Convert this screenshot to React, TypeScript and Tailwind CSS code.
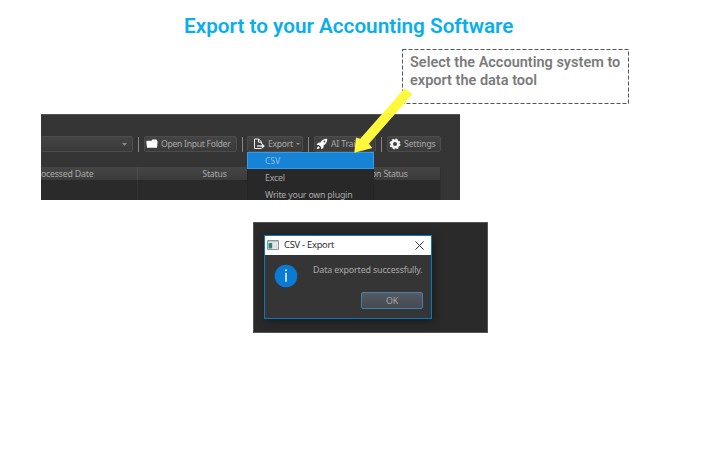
import React from 'react';

const ui = "font-['Noto_Sans','Open_Sans',sans-serif]";

function Separator() {
  return <span className="h-[15px] w-px shrink-0 bg-[#858585]" />;
}

function ToolButton({ className, children }: { className: string; children: React.ReactNode }) {
  return (
    <div
      className={`flex h-4 shrink-0 items-center whitespace-nowrap rounded-[2px] border border-[#4c4c4c] bg-linear-to-b from-[#444] to-[#3a3a3a] text-[8.7px] leading-[10px] tracking-[-0.19px] text-[#a9a9a9] ${className}`}
    >
      {children}
    </div>
  );
}

function FolderIcon() {
  return (
    <svg className="mr-[3px] h-[10px] w-[12px] shrink-0" viewBox="0 0 12 10">
      <path d="M.8 1.7h4.7L6.4.5h4l.6 1.3.6.8-.6 6.1H1L.3 2.7z" fill="#fff" />
      <path d="M.8 2.5h10.4" stroke="#ddd" strokeWidth=".5" />
    </svg>
  );
}

function ExportIcon() {
  return (
    <svg className="mr-1 h-[12px] w-[12px] shrink-0" viewBox="0 0 12 12" fill="none" stroke="#eee">
      <path d="M8.5 6V4L5.7 1H1.5v9.5h7M5.5 1v3.2h3" />
      <path d="M4 8h6" strokeWidth="1.3" />
      <path d="M8.8 5.3 11.9 8l-3.1 2.7z" fill="#eee" stroke="none" />
    </svg>
  );
}

function RocketIcon() {
  return (
    <svg className="mr-[3px] h-[12px] w-[12px] shrink-0" viewBox="0 0 12 12">
      <path d="M11.2.8C8 .7 6 2 4.4 4.4L2 4.7.5 7l2.4-.1 2.2 2.2L5 11.5 7.3 10l.3-2.4C10 6 11.3 4 11.2.8z" fill="#fff" />
      <path d="M2.5 8.2C1.3 8.5 1 9.8.9 11c1.3-.1 2.5-.4 2.9-1.6z" fill="#fff" />
      <circle cx="8.5" cy="3.5" r=".9" fill="#444" />
    </svg>
  );
}

function GearIcon() {
  return (
    <svg className="mr-[3px] h-[12px] w-[12px] shrink-0" viewBox="0 0 12 12" fill="none" stroke="#f4f4f4">
      <circle cx="6" cy="6" r="3.3" strokeWidth="2.6" />
      <circle cx="6" cy="6" r="4.8" strokeWidth="1.3" strokeDasharray="2.1 1.67" />
    </svg>
  );
}

function Toolbar() {
  return (
    <section className="relative ml-[41px] mt-[10px] h-[86px] w-[419px] overflow-hidden border-t border-[#555] bg-[#353535]">
      <div className="mt-[21px] flex h-4 items-center">
        <ToolButton className="w-[92px] justify-end border-l-0 pr-[5px]">
          <svg className="h-[3px] w-[5px]" viewBox="0 0 5 3"><path d="M0 0h5L2.5 3z" fill="#8b8b8b" /></svg>
        </ToolButton>
        <div className="flex w-[11px] justify-center"><Separator /></div>
        <ToolButton className="w-[93px] pl-px"><FolderIcon /><span className="tracking-[-0.32px]">Open Input Folder</span></ToolButton>
        <div className="flex w-[10px] justify-center"><Separator /></div>
        <ToolButton className="w-[56px] pl-[5px]">
          <ExportIcon /><span className="-ml-px tracking-[-0.3px]">Export</span>
          <svg className="ml-[3px] h-[2px] w-1" viewBox="0 0 4 2"><path d="M0 0h4L2 2z" fill="#999" /></svg>
        </ToolButton>
        <div className="flex w-[11px] justify-center"><Separator /></div>
        <ToolButton className="w-[62px] pl-px"><RocketIcon /><span>AI Train</span></ToolButton>
        <div className="flex w-[11px] justify-center"><Separator /></div>
        <ToolButton className="w-[54px] pl-px"><GearIcon /><span>Settings</span></ToolButton>
      </div>
      <div className="mt-[15px] h-[34px] w-[400px] border-r border-[#303030] bg-[#2a2a2a] text-[8.8px] tracking-[-0.22px] text-[#aaa]">
        <div className="flex h-[13px] items-center bg-linear-to-b from-[#454545] to-[#3b3b3b] leading-none">
          <div className="h-[13px] w-[97px] border-r border-[#4b4b4b] pt-[3px]">ocessed Date</div>
          <div className="h-[13px] w-[153px] pt-[3px] text-center">Status</div>
          <div className="h-[13px] w-[149px] pl-[80px] pt-[3px]">on Status</div>
        </div>
        <div className="h-5 w-[97px] border-r border-[#333]" />
      </div>
      <div className="absolute left-[206px] top-[37px] w-[127px] border-x border-[#242424] bg-[#282828] text-[8.8px] tracking-[-0.2px] text-[#aaa]">
        <div className="-mx-px flex h-[17px] items-center border border-[#359be4] bg-[#1683d7] pl-[17px] pt-[2px] text-[#8fbde0]">CSV</div>
        <div className="flex h-[17px] items-center pl-[17px] pt-[2px]">Excel</div>
        <div className="flex h-[17px] items-center whitespace-nowrap pl-[17px] pt-[2px]">Write your own plugin</div>
      </div>
    </section>
  );
}

function ExportDialog() {
  return (
    <section className="ml-[253px] mt-[22px] h-[111px] w-[235px] border border-[#555] bg-[#2a2a2a] pl-[10px] pt-3">
      <div className="h-[84px] w-[168px] border border-[#0878c0] bg-[#353535] shadow-[2px_2px_9px_rgba(0,0,0,0.4)]">
        <div className="flex h-[19px] items-center bg-white pb-px">
          <svg className="ml-[2px] h-[10px] w-[12px]" viewBox="0 0 12 10">
            <path d="M.5.5h11v9H.5z" fill="#e9eded" stroke="#8d9699" />
            <path d="M1 1h10v1.2H1z" fill="#b8c4c9" />
            <path d="M1.5 3h3.7v5.5H1.5z" fill="#318578" />
            <path d="M6.5 3.5h1v5h-1zM9 3.5h1v5H9z" fill="#cfd3d3" />
          </svg>
          <span className="ml-[5px] font-['Open_Sans','Noto_Sans',sans-serif] text-[9.4px] leading-none tracking-[-0.25px] text-[#202020]">CSV - Export</span>
          <svg className="ml-auto mr-[7px] h-[9px] w-[9px]" viewBox="0 0 9 9"><path d="m.5.5 8 8m0-8-8 8" stroke="#333" /></svg>
        </div>
        <div className="flex h-[36px] pl-[9px] pt-[9px]">
          <svg className="h-[24px] w-[24px] shrink-0" viewBox="0 0 24 24">
            <circle cx="12" cy="12" r="11.3" fill="#0a7bd5" />
            <path d="M11.3 8.8h1.4v9h-1.4zM11.2 5.5h1.6v1.6h-1.6z" fill="#fff" />
          </svg>
          <span className="ml-[15px] whitespace-nowrap text-[8.9px] leading-[12px] tracking-[-0.14px] text-[#aaa]">Data exported successfully.</span>
        </div>
        <div className="ml-[96px] mt-px flex h-[17px] w-[62px] items-center justify-center rounded-[2px] border border-[#447fae] bg-linear-to-b from-[#555962] to-[#454951] pt-[2px] text-[8.8px] leading-none tracking-[-0.2px] text-[#a8a8a8]">OK</div>
      </div>
    </section>
  );
}

export default function App() {
  return (
    <main className={`relative h-[460px] w-[710px] overflow-hidden bg-white ${ui}`}>
      <h1 className="ml-[184px] h-[49px] whitespace-nowrap pt-[14px] font-['Roboto',sans-serif] text-[20.7px] font-semibold leading-[25px] text-[#09aeea]">Export to your Accounting Software</h1>
      <aside className="relative ml-[402px] h-[55px] w-[227px] pl-2 pt-[5px] font-['Roboto',sans-serif] text-[14.5px] font-semibold leading-[18px] text-[#7b7b7b]">
        <svg className="absolute inset-0 h-[55px] w-[227px]" viewBox="0 0 227 55" fill="none">
          <path d="M.5.5h226v54H.5z" stroke="#555" strokeDasharray="4 2" />
        </svg>
        <p className="whitespace-nowrap">Select the Accounting system to<br />export the data tool</p>
      </aside>
      <Toolbar />
      <ExportDialog />
      <svg className="absolute left-[350px] top-[85px] h-[72px] w-[66px]" viewBox="350 85 66 72">
        <path d="M404.5 88.5l8 5.5-43.6 49.8 3.4 4.2-18 4.8 1.7-15.3 4.2 1.2z" fill="#fff83d" />
      </svg>
    </main>
  );
}
